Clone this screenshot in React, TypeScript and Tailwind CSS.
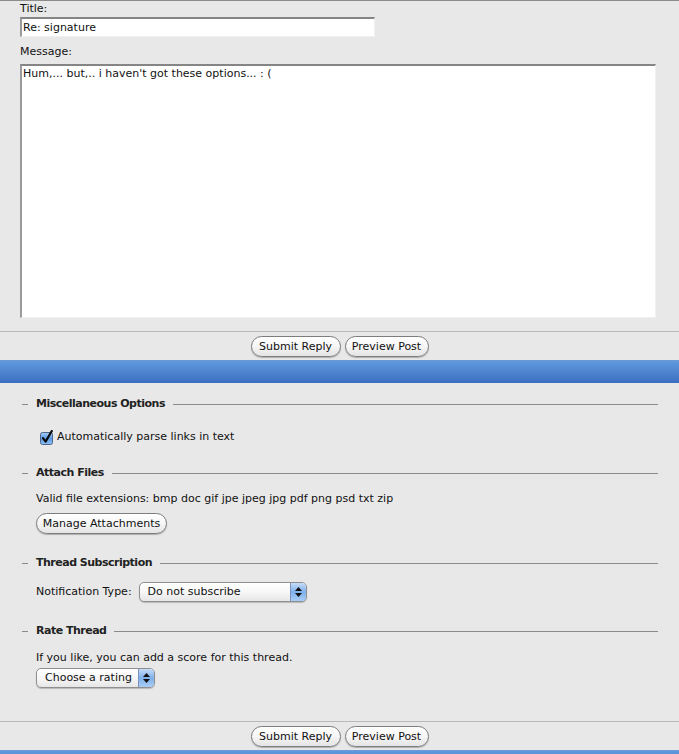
import React from 'react';

// Aqua-style pill push button
const PillButton = ({ label, width }: { label: string; width: string }) => (
  <button
    type="button"
    className={`${width} h-[21px] rounded-full border border-[#7d7d7d] bg-gradient-to-b from-white via-[#f6f6f6] to-[#e4e4e4] text-[11px] leading-none text-[#111] shadow-[0_1px_1px_rgba(0,0,0,0.25)]`}
  >
    {label}
  </button>
);

// Fieldset heading: short dash, bold title, rule to the right
const Legend = ({ title, className = '' }: { title: string; className?: string }) => (
  <div className={`flex h-[14px] items-center pl-[22px] pr-[21px] ${className}`}>
    <span className="h-px w-[6px] bg-[#8a8a8a]" />
    <span className="px-[8px] text-[11px] font-bold leading-[14px] tracking-[-0.5px] text-[#222]">{title}</span>
    <span className="h-px flex-1 bg-[#8a8a8a]" />
  </div>
);

// Aqua popup menu with the blue stepper arrows on the right
const PopupSelect = ({ label, width }: { label: string; width: string }) => (
  <div
    className={`${width} flex h-[20px] overflow-hidden rounded-[5px] border border-[#8f8f8f] bg-gradient-to-b from-white via-[#f7f7f7] to-[#e6e6e6] shadow-[0_1px_1px_rgba(0,0,0,0.2)]`}
  >
    <span className="flex-1 pl-[8px] text-[11px] leading-[18px] text-[#111]">{label}</span>
    <span className="flex w-[16px] flex-col items-center justify-center gap-[2px] border-l border-[#7b93b8] bg-gradient-to-b from-[#c6dcf7] via-[#7fb0ec] to-[#a9ccf5]">
      <svg width="7" height="4" viewBox="0 0 7 4">
        <path d="M3.5 0 L7 4 L0 4 Z" fill="#111" />
      </svg>
      <svg width="7" height="4" viewBox="0 0 7 4">
        <path d="M0 0 L7 0 L3.5 4 Z" fill="#111" />
      </svg>
    </span>
  </div>
);

const CheckedBox = () => (
  <svg width="14" height="15" viewBox="0 0 14 15">
    <defs>
      <linearGradient id="cbFill" x1="0" y1="0" x2="0" y2="1">
        <stop offset="0" stopColor="#a9cdf6" />
        <stop offset="0.5" stopColor="#5d9be6" />
        <stop offset="1" stopColor="#8dc0f4" />
      </linearGradient>
    </defs>
    <rect x="0.5" y="2.5" width="12" height="12" rx="2" fill="url(#cbFill)" stroke="#4d6587" />
    <path d="M3 8.2 L5.6 11.6 L11.8 1" fill="none" stroke="#0b0b0b" strokeWidth="2.2" strokeLinecap="round" strokeLinejoin="round" />
  </svg>
);

const inset =
  'border-t-2 border-l-2 border-r border-b border-t-[#858585] border-l-[#9a9a9a] border-r-[#f1f1f1] border-b-[#f1f1f1] bg-white outline-none';

export default function App() {
  return (
    <div className="h-[754px] overflow-hidden bg-[#e8e8e8] font-['DejaVu_Sans',sans-serif] text-[11px] text-[#111]">
      <div className="h-px bg-[#8c8c8c]" />

      {/* Reply form */}
      <div className="px-[20px]">
        <label className="block leading-[15px]">Title:</label>
        <input
          readOnly
          value="Re: signature"
          className={`mt-[1px] block h-[20px] w-[355px] px-[1px] text-[11px] leading-[16px] ${inset}`}
        />
        <label className="mt-[8px] block leading-[14px]">Message:</label>
        <textarea
          readOnly
          value="Hum,... but,.. i haven't got these options... : ("
          className={`mt-[5px] block h-[254px] w-[636px] resize-none px-[1px] pt-[1px] text-[11px] leading-[14px] ${inset}`}
        />
      </div>

      <div className="mt-[13px] h-px bg-[#b9b9b9]" />
      <div className="flex justify-center gap-[4px] pt-[4px]">
        <PillButton label="Submit Reply" width="w-[90px]" />
        <PillButton label="Preview Post" width="w-[84px]" />
      </div>

      <div className="mt-[3px] h-[23px] border-t border-[#6d9ad6] bg-gradient-to-b from-[#6199dd] to-[#3a6fc1]" />

      {/* Additional options */}
      <Legend title="Miscellaneous Options" className="mt-[14px]" />
      <div className="mt-[18px] flex h-[16px] items-center gap-[3px] pl-[40px]">
        <CheckedBox />
        <span className="leading-[14px]">Automatically parse links in text</span>
      </div>

      <Legend title="Attach Files" className="mt-[21px]" />
      <div className="mt-[12px] pl-[36px] leading-[14px]">
        Valid file extensions: bmp doc gif jpe jpeg jpg pdf png psd txt zip
      </div>
      <div className="mt-[7px] pl-[36px]">
        <PillButton label="Manage Attachments" width="w-[131px]" />
      </div>

      <Legend title="Thread Subscription" className="mt-[22px]" />
      <div className="mt-[12px] flex items-center gap-[7px] pl-[36px]">
        <span className="leading-[14px]">Notification Type:</span>
        <PopupSelect label="Do not subscribe" width="w-[168px]" />
      </div>

      <Legend title="Rate Thread" className="mt-[22px]" />
      <div className="mt-[13px] pl-[36px] leading-[14px]">If you like, you can add a score for this thread.</div>
      <div className="mt-[3px] pl-[36px]">
        <PopupSelect label="Choose a rating" width="w-[119px]" />
      </div>

      <div className="mt-[33px] h-px bg-[#b9b9b9]" />
      <div className="flex justify-center gap-[4px] pt-[4px]">
        <PillButton label="Submit Reply" width="w-[90px]" />
        <PillButton label="Preview Post" width="w-[84px]" />
      </div>
      <div className="mt-[3px] h-[23px] border-t border-[#6d9ad6] bg-gradient-to-b from-[#6199dd] to-[#3a6fc1]" />
    </div>
  );
}
